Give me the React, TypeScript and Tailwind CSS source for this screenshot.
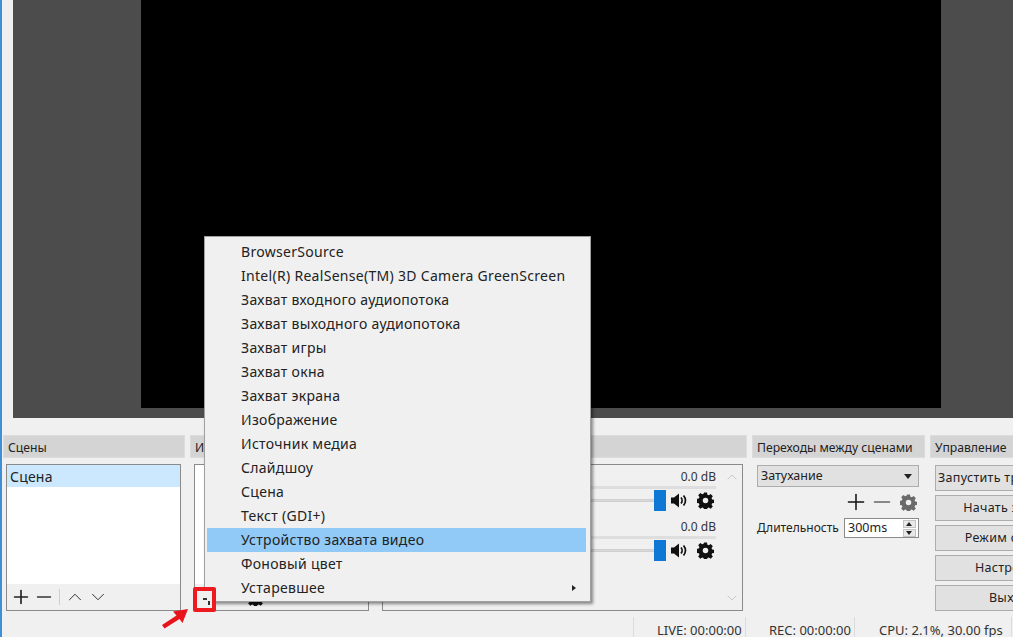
import React from "react";
import { Plus, Minus, ChevronUp, ChevronDown } from "lucide-react";

const Gear = ({ size = 17, color = "#111" }: { size?: number; color?: string }) => (
  <svg width={size} height={size} viewBox="0 0 16 16" className="shrink-0">
    <path
      fill={color}
      fillRule="evenodd"
      d="M6.6 0.5h2.8l.4 2.1 1.3.55 1.8-1.2 2 2-1.2 1.8.55 1.3 2.1.4v2.8l-2.1.4-.55 1.3 1.2 1.8-2 2-1.8-1.2-1.3.55-.4 2.1H6.6l-.4-2.1-1.3-.55-1.8 1.2-2-2 1.2-1.8-.55-1.3-2.1-.4V6.45l2.1-.4.55-1.3-1.2-1.8 2-2 1.8 1.2 1.3-.55zM8 5.4a2.6 2.6 0 1 0 0 5.2 2.6 2.6 0 0 0 0-5.2z"
    />
  </svg>
);

const Speaker = () => (
  <svg width={17} height={15} viewBox="0 0 17 15" className="shrink-0">
    <path fill="#111" d="M0 4.5h3l5-4v14l-5-4H0z" />
    <path fill="none" stroke="#111" strokeWidth="1.8" d="M10 4.5c1.4 1.6 1.4 4.4 0 6M12.5 2.5c2.6 3 2.6 7 0 10" />
  </svg>
);

const Header = ({ children, className }: { children?: React.ReactNode; className: string }) => (
  <div className={`h-[23px] shrink-0 bg-[#d4d4d4] border border-[#dcdcdc] pl-[4px] leading-[24px] text-[12.2px] text-[#222] whitespace-nowrap overflow-hidden ${className}`}>
    {children}
  </div>
);

const MixerRow = () => (
  <div className="h-[50px] flex flex-col relative">
    <div className="h-[21px] text-right pr-[26px] pt-[3px] text-[12px] leading-[18px] text-[#333]">0.0 dB</div>
    <div className="h-[3px] mr-[26px] bg-[#dedede]" />
    <div className="flex items-center h-[21px] mt-[1px] pr-[28px]">
      <div className="flex-1 h-[3px] bg-[#d9d9d9] border-y border-[#cfcfcf]" />
      <div className="w-[12px] h-[21px] bg-[#0f78d4] mr-[-1px] relative" />
      <div className="ml-[6px] mr-[9px] flex"><Speaker /></div>
      <Gear />
    </div>
  </div>
);

const ControlButton = ({ children, start }: { children: string; start?: boolean }) => (
  <div className={`h-[26px] w-[148px] shrink-0 bg-[#e1e1e1] border border-[#adadad] text-[12.5px] tracking-[0.3px] leading-[24px] text-[#222] whitespace-nowrap ${start ? "pl-[2px]" : "text-center"}`}>
    {children}
  </div>
);

const menuItems = [
  "BrowserSource",
  "Intel(R) RealSense(TM) 3D Camera GreenScreen",
  "Захват входного аудиопотока",
  "Захват выходного аудиопотока",
  "Захват игры",
  "Захват окна",
  "Захват экрана",
  "Изображение",
  "Источник медиа",
  "Слайдшоу",
  "Сцена",
  "Текст (GDI+)",
  "Устройство захвата видео",
  "Фоновый цвет",
  "Устаревшее",
];

export default function App() {
  return (
    <div className="relative w-[1013px] h-[637px] overflow-hidden bg-[#f0f0f0] flex flex-col font-['Noto_Sans','Open_Sans',sans-serif] text-[#222]">
      {/* window edge */}
      <div className="absolute left-0 top-0 w-[2px] h-full bg-[#3f8fd8]" />

      {/* preview */}
      <div className="ml-[13px] h-[418px] shrink-0 bg-[#4c4c4c]">
        <div className="ml-[128px] w-[800px] h-[408px] bg-black" />
      </div>

      {/* docks */}
      <div className="flex gap-[5px] pl-[3px] pt-[17px] h-[199px] shrink-0">
        {/* scenes */}
        <div className="w-[182px] shrink-0 flex flex-col">
          <Header className="w-full">Сцены</Header>
          <div className="ml-[3px] mt-[6px] w-[175px] h-[147px] bg-white border border-[#8a8a8a] flex flex-col">
            <div className="h-[22px] bg-[#cce8ff] pl-[3px] text-[14px] tracking-[0.2px] leading-[24px]">Сцена</div>
            <div className="flex-1" />
            <div className="h-[26px] bg-[#f0f0f0] flex items-center pl-[3px] text-[#222]">
              <Plus size={22} strokeWidth={1.8} />
              <Minus size={22} strokeWidth={1.8} className="ml-[1px] text-[#333]" />
              <div className="w-px h-[16px] bg-[#d0d0d0] ml-[4px] mr-[4px]" />
              <ChevronUp size={22} strokeWidth={1} />
              <ChevronDown size={22} strokeWidth={1} className="ml-[1px]" />
            </div>
          </div>
        </div>

        {/* sources */}
        <div className="w-[183px] shrink-0 flex flex-col">
          <Header className="w-full">И</Header>
          <div className="ml-[4px] mt-[6px] w-[175px] h-[147px] bg-white border border-[#8a8a8a] flex flex-col">
            <div className="flex-1" />
            <div className="h-[26px] bg-[#f0f0f0] flex items-center pl-[52px]">
              <Gear />
            </div>
          </div>
        </div>

        {/* mixer */}
        <div className="w-[369px] shrink-0 flex flex-col">
          <Header className="w-full" />
          <div className="ml-[4px] mt-[6px] w-[361px] h-[147px] border border-[#8a8a8a] flex bg-[#f0f0f0]">
            <div className="flex-1 flex flex-col pl-[190px] relative">
              <MixerRow />
              <MixerRow />
              <div className="absolute right-0 top-0 bottom-0 w-[21px] bg-[#f0f0f0] flex flex-col items-center justify-between py-[4px] text-[#c8c8c8]">
                <ChevronUp size={16} strokeWidth={1.5} />
                <ChevronDown size={16} strokeWidth={1.5} />
              </div>
            </div>
          </div>
        </div>

        {/* transitions */}
        <div className="w-[173px] shrink-0 flex flex-col">
          <Header className="w-full">Переходы между сценами</Header>
          <div className="ml-[5px] mt-[7px] w-[162px] h-[22px] bg-[#e1e1e1] border border-[#adadad] flex items-center justify-between pl-[3px] pr-[6px] text-[12.5px] leading-[20px]">
            <span>Затухание</span>
            <span className="w-0 h-0 border-x-[4px] border-x-transparent border-t-[5px] border-t-[#222]" />
          </div>
          <div className="flex items-center h-[30px] ml-[91px]">
            <Plus size={26} strokeWidth={1.4} className="text-[#111] shrink-0" />
            <Minus size={26} strokeWidth={1.4} className="text-[#666] shrink-0" />
            <div className="ml-[5px]"><Gear color="#6a6a6a" /></div>
          </div>
          <div className="flex items-center ml-[5px] mt-[1px]">
            <span className="w-[87px] text-[12px] leading-[20px] whitespace-nowrap">Длительность</span>
            <div className="w-[75px] h-[20px] bg-white border border-[#8a8a8a] flex items-center justify-between pl-[3px] text-[12.5px] leading-[18px]">
              <span>300ms</span>
              <div className="w-[16px] h-full flex flex-col items-center justify-center gap-px pr-[2px]">
                <span className="w-[13px] h-[8px] bg-[#e8e8e8] border border-[#c4c4c4] flex items-center justify-center">
                  <span className="w-0 h-0 border-x-[3.5px] border-x-transparent border-b-[4px] border-b-[#222]" />
                </span>
                <span className="w-[13px] h-[8px] bg-[#e8e8e8] border border-[#c4c4c4] flex items-center justify-center">
                  <span className="w-0 h-0 border-x-[3.5px] border-x-transparent border-t-[4px] border-t-[#222]" />
                </span>
              </div>
            </div>
          </div>
        </div>

        {/* controls */}
        <div className="w-[200px] shrink-0 flex flex-col">
          <Header className="w-full">Управление</Header>
          <div className="ml-[5px] mt-[7px] flex flex-col gap-[4px]">
            <ControlButton start>Запустить трансляцию</ControlButton>
            <ControlButton>Начать запись</ControlButton>
            <ControlButton>Режим студии</ControlButton>
            <ControlButton>Настройки</ControlButton>
            <ControlButton>Выход</ControlButton>
          </div>
        </div>
      </div>

      {/* status bar */}
      <div className="h-[20px] shrink-0 flex text-[13px] leading-[26px] text-[#333] whitespace-nowrap">
        <div className="w-[633px] shrink-0" />
        <div className="w-[112px] shrink-0 border-l border-[#dcdcdc] pl-[23px]">LIVE: 00:00:00</div>
        <div className="w-[109px] shrink-0 border-l border-[#dcdcdc] pl-[23px]">REC: 00:00:00</div>
        <div className="w-[157px] shrink-0 border-l border-[#dcdcdc] pl-[24px]">CPU: 2.1%, 30.00 fps</div>
        <div className="flex-1 border-l border-[#dcdcdc]" />
      </div>

      {/* context menu */}
      <div className="absolute left-[204px] top-[236px] w-[387px] h-[366px] bg-[#f0f0f0] border border-[#a0a0a0] shadow-[2px_2px_3px_rgba(0,0,0,0.45)] pt-[3px] pl-[2px] pr-[4px]">
        {menuItems.map((item) => (
          <div
            key={item}
            className={`h-[24px] pl-[34px] text-[14px] tracking-[0.3px] leading-[24px] text-[#222] whitespace-nowrap relative ${item.startsWith("Устройство") ? "bg-[#91c9f7]" : ""}`}
          >
            {item}
            {item === "Устаревшее" && (
              <span className="absolute right-[10px] top-[9px] w-0 h-0 border-y-[3.5px] border-y-transparent border-l-[4px] border-l-[#222]" />
            )}
          </div>
        ))}
      </div>

      {/* red marker */}
      <div className="absolute left-[193px] top-[587px] w-[23px] h-[25px] border-[4px] border-[#ee1a20] rounded-[2px] bg-[#f0f0f0]">
        <div className="absolute left-[6px] top-[7px] w-[4px] h-[1.5px] bg-[#333]" />
        <div className="absolute left-[11px] top-[10px] w-[1.5px] h-[4px] bg-[#333]" />
      </div>
      <svg className="absolute left-[160px] top-[606px]" width={32} height={24} viewBox="0 0 32 24">
        <path fill="#e8141c" d="M28 3 L13 5.5 L16.5 9.5 L2 19 L4.5 22.5 L19.5 13 L22.5 17 Z" />
      </svg>
    </div>
  );
}
